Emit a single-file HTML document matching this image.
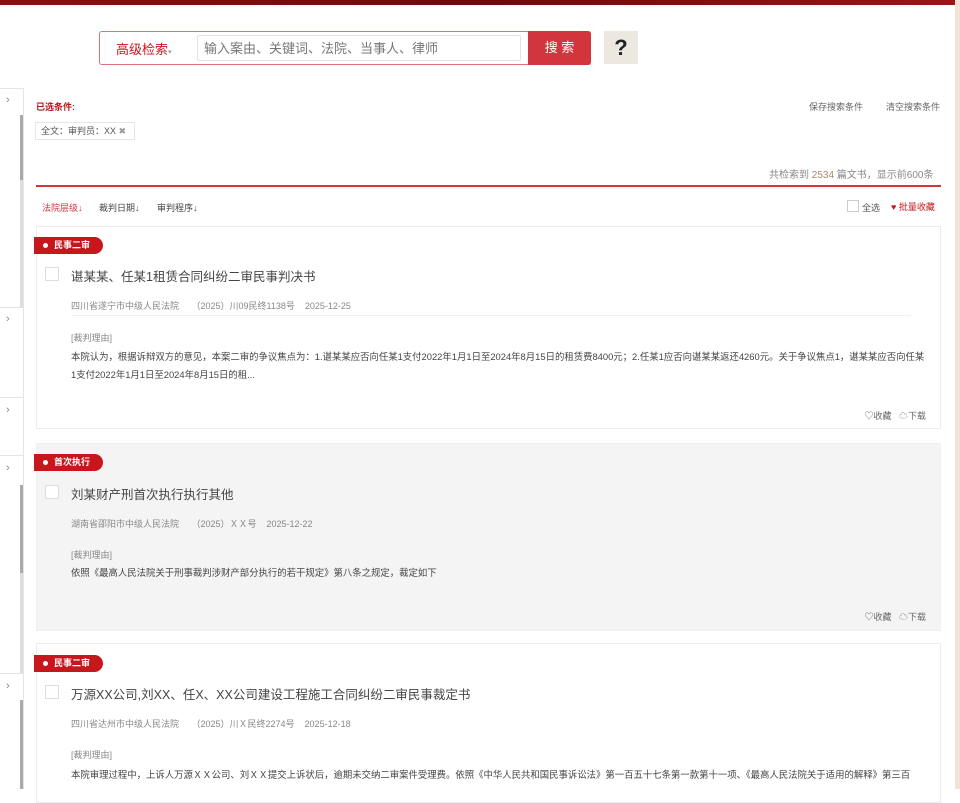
<!DOCTYPE html>
<html><head><meta charset="utf-8"><style>
*{margin:0;padding:0;box-sizing:border-box}
body{width:960px;height:789px;overflow:hidden;background:#fff;font-family:"Liberation Sans","Noto Sans CJK SC",sans-serif;color:#555;position:relative}
.abs{position:absolute}
.topbar{left:0;top:0;width:960px;height:5px;background:linear-gradient(90deg,#8a1010,#6e0a0a 50%,#9a1515)}
.rstrip{left:955px;top:0;width:5px;height:789px;background:#f1e4d6}
.sb{left:0;top:88px;width:24px;height:701px;border-right:1px solid #e4e4e4}
.hl{position:absolute;left:0;width:23px;height:1px;background:#e4e4e4}
.chev{position:absolute;left:6px;font-size:11px;color:#888}
.card{position:absolute;left:36px;width:905px;border:1px solid #ececec;background:#fff}
.tag{position:absolute;left:-3px;width:69px;height:17px;background:#c8161d;color:#fff;font-size:9px;line-height:17px;padding-left:20px;border-radius:0 9px 9px 0;font-weight:bold}
.tag:before{content:"";position:absolute;left:9px;top:6px;width:5px;height:5px;border-radius:50%;background:#fff}
.cb{position:absolute;left:8px;width:14px;height:14px;border:1px solid #ddd;background:#fff}
.title{position:absolute;left:34px;font-size:12.5px;color:#444}
.meta{position:absolute;left:34px;font-size:9px;color:#888;word-spacing:0}
.reason{position:absolute;left:34px;font-size:9px;color:#888}
.body{position:absolute;left:34px;right:12px;font-size:9.4px;color:#444;line-height:18px}
.act{position:absolute;right:14px;font-size:9px;color:#666}
</style></head><body>
<div class="abs topbar"></div>
<div class="abs rstrip"></div>
<div class="abs sb">
 <div class="hl" style="top:0"></div>
 <div class="chev" style="top:6px">›</div>
 <div class="abs" style="left:20px;top:27px;width:3px;height:65px;background:#aaa"></div>
 <div class="abs" style="left:20px;top:92px;width:3px;height:127px;background:#ddd"></div>
 <div class="hl" style="top:219px"></div>
 <div class="chev" style="top:225px">›</div>
 <div class="hl" style="top:309px"></div>
 <div class="chev" style="top:316px">›</div>
 <div class="hl" style="top:367px"></div>
 <div class="chev" style="top:374px">›</div>
 <div class="abs" style="left:20px;top:397px;width:3px;height:88px;background:#aaa"></div>
 <div class="abs" style="left:20px;top:485px;width:3px;height:100px;background:#ddd"></div>
 <div class="hl" style="top:585px"></div>
 <div class="chev" style="top:592px">›</div>
 <div class="abs" style="left:20px;top:612px;width:3px;height:89px;background:#aaa"></div>
</div>

<div class="abs" style="left:99px;top:31px;width:492px;height:34px;border:1px solid #d9747a;border-radius:3px"></div>
<div class="abs" style="left:116px;top:39px;font-size:13px;color:#c8161d">高级检索<span style="font-size:7px;color:#999">▾</span></div>
<div class="abs" style="left:197px;top:35px;width:324px;height:26px;border:1px solid #e3e3e3;border-radius:2px;background:#fff;font-size:13px;color:#777;padding:2px 6px">输入案由、关键词、法院、当事人、律师</div>
<div class="abs" style="left:528px;top:31px;width:63px;height:34px;background:#d2363c;color:#fff;font-size:13px;line-height:34px;text-align:center;border-radius:0 3px 3px 0">搜 索</div>
<div class="abs" style="left:604px;top:31px;width:34px;height:33px;background:#ece8df;font-size:22px;font-weight:bold;color:#222;text-align:center;line-height:33px">?</div>

<div class="abs" style="left:36px;top:100px;font-size:9px;color:#b3151b;font-weight:bold">已选条件:</div>
<div class="abs" style="left:809px;top:100px;font-size:9px;color:#666">保存搜索条件</div>
<div class="abs" style="left:886px;top:100px;font-size:9px;color:#666">清空搜索条件</div>
<div class="abs" style="left:35px;top:122px;width:100px;height:18px;border:1px solid #e6e6e6;font-size:9px;color:#555;line-height:16px;padding-left:5px">全文：审判员：XX <span style="color:#999">✖</span></div>
<div class="abs" style="left:769px;top:166px;font-size:10px;color:#888">共检索到 <span style="color:#a68a6a">2534</span> 篇文书，显示前600条</div>
<div class="abs" style="left:36px;top:185px;width:905px;height:2px;background:#d2363c"></div>
<div class="abs" style="left:42px;top:201px;font-size:9px;color:#d2363c">法院层级<b>↓</b></div>
<div class="abs" style="left:99px;top:201px;font-size:9px;color:#444">裁判日期<b>↓</b></div>
<div class="abs" style="left:157px;top:201px;font-size:9px;color:#444">审判程序<b>↓</b></div>
<div class="abs" style="left:847px;top:200px;width:12px;height:12px;border:1px solid #ccc"></div>
<div class="abs" style="left:862px;top:201px;font-size:9px;color:#555">全选</div>
<div class="abs" style="left:891px;top:200px;font-size:9px;color:#c8161d">♥ 批量收藏</div>

<div class="card" style="top:226px;height:203px">
 <div class="tag" style="top:10px">民事二审</div>
 <div class="cb" style="top:40px"></div>
 <div class="title" style="top:39px">谌某某、任某1租赁合同纠纷二审民事判决书</div>
 <div class="meta" style="top:72px">四川省遂宁市中级人民法院 &nbsp;&nbsp;&nbsp;&nbsp;（2025）川09民终1138号 &nbsp;&nbsp;&nbsp;2025-12-25</div>
 <div class="abs" style="left:34px;top:88px;width:840px;height:1px;background:#f0f0f0"></div>
 <div class="reason" style="top:104px">[裁判理由]</div>
 <div class="body" style="top:121px">本院认为，根据诉辩双方的意见，本案二审的争议焦点为：1.谌某某应否向任某1支付2022年1月1日至2024年8月15日的租赁费8400元；2.任某1应否向谌某某返还4260元。关于争议焦点1，谌某某应否向任某1支付2022年1月1日至2024年8月15日的租...</div>
 <div class="act" style="top:182px">♡收藏 &nbsp;&nbsp;☁下载</div>
</div>

<div class="card" style="top:443px;height:188px;background:#f4f4f5;border-color:#f0f0f0">
 <div class="tag" style="top:10px">首次执行</div>
 <div class="cb" style="top:41px"></div>
 <div class="title" style="top:40px">刘某财产刑首次执行执行其他</div>
 <div class="meta" style="top:73px">湖南省邵阳市中级人民法院 &nbsp;&nbsp;&nbsp;&nbsp;（2025）ＸＸ号 &nbsp;&nbsp;&nbsp;2025-12-22</div>
 <div class="reason" style="top:104px">[裁判理由]</div>
 <div class="body" style="top:120px">依照《最高人民法院关于刑事裁判涉财产部分执行的若干规定》第八条之规定，裁定如下</div>
 <div class="act" style="top:166px">♡收藏 &nbsp;&nbsp;☁下载</div>
</div>

<div class="card" style="top:643px;height:160px">
 <div class="tag" style="top:11px">民事二审</div>
 <div class="cb" style="top:41px"></div>
 <div class="title" style="top:40px">万源XX公司,刘XX、任X、XX公司建设工程施工合同纠纷二审民事裁定书</div>
 <div class="meta" style="top:73px">四川省达州市中级人民法院 &nbsp;&nbsp;&nbsp;&nbsp;（2025）川Ｘ民终2274号 &nbsp;&nbsp;&nbsp;2025-12-18</div>
 <div class="reason" style="top:104px">[裁判理由]</div>
 <div class="body" style="top:122px;white-space:nowrap;overflow:hidden">本院审理过程中，上诉人万源ＸＸ公司、刘ＸＸ提交上诉状后，逾期未交纳二审案件受理费。依照《中华人民共和国民事诉讼法》第一百五十七条第一款第十一项、《最高人民法院关于适用的解释》第三百</div>
</div>
</body></html>
